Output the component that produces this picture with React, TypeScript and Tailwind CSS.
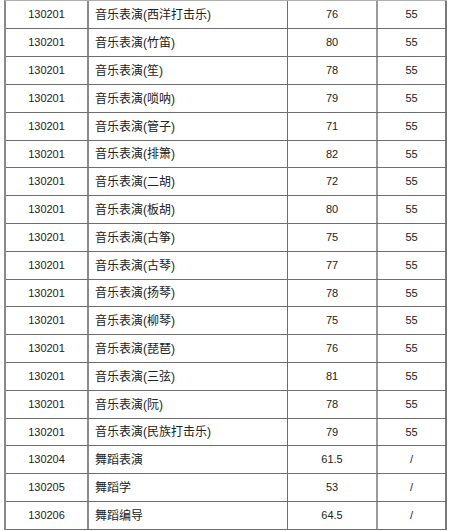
import React from "react";

const rows: [string, string, string, string][] = [
  ["130201", "音乐表演(西洋打击乐)", "76", "55"],
  ["130201", "音乐表演(竹笛)", "80", "55"],
  ["130201", "音乐表演(笙)", "78", "55"],
  ["130201", "音乐表演(唢呐)", "79", "55"],
  ["130201", "音乐表演(管子)", "71", "55"],
  ["130201", "音乐表演(排箫)", "82", "55"],
  ["130201", "音乐表演(二胡)", "72", "55"],
  ["130201", "音乐表演(板胡)", "80", "55"],
  ["130201", "音乐表演(古筝)", "75", "55"],
  ["130201", "音乐表演(古琴)", "77", "55"],
  ["130201", "音乐表演(扬琴)", "78", "55"],
  ["130201", "音乐表演(柳琴)", "75", "55"],
  ["130201", "音乐表演(琵琶)", "76", "55"],
  ["130201", "音乐表演(三弦)", "81", "55"],
  ["130201", "音乐表演(阮)", "78", "55"],
  ["130201", "音乐表演(民族打击乐)", "79", "55"],
  ["130204", "舞蹈表演", "61.5", "/"],
  ["130205", "舞蹈学", "53", "/"],
  ["130206", "舞蹈编导", "64.5", "/"],
];

const shortRows = new Set([5, 10, 15]);

export default function App() {
  return (
    <div
      className="w-[451px] h-[531px] bg-white overflow-hidden pl-[4px]"
      style={{ fontFamily: '"Liberation Sans", "Noto Sans CJK SC", sans-serif' }}
    >
      <div className="w-[443px] border-l-2 border-t border-l-[#8a8a8a] border-t-[#b0b0b0] text-[12px] text-[#222]">
        {rows.map((r, i) => (
          <div
            key={i}
            className={
              "grid grid-cols-[83px_199px_90px_69px] border-b border-[#6e6e6e] " +
              (shortRows.has(i) ? "h-[27px]" : "h-[28px]")
            }
          >
            <div className="flex items-center justify-center border-r-2 border-[#8a8a8a] text-[11px]">
              {r[0]}
            </div>
            <div className="flex items-center pl-[6px] border-r border-[#6e6e6e]">{r[1]}</div>
            <div className="flex items-center justify-center border-r-2 border-[#9a9a9a] text-[11px]">
              {r[2]}
            </div>
            <div className="flex items-center justify-center border-r-2 border-[#7a7a7a] text-[11px]">
              {r[3]}
            </div>
          </div>
        ))}
      </div>
    </div>
  );
}
